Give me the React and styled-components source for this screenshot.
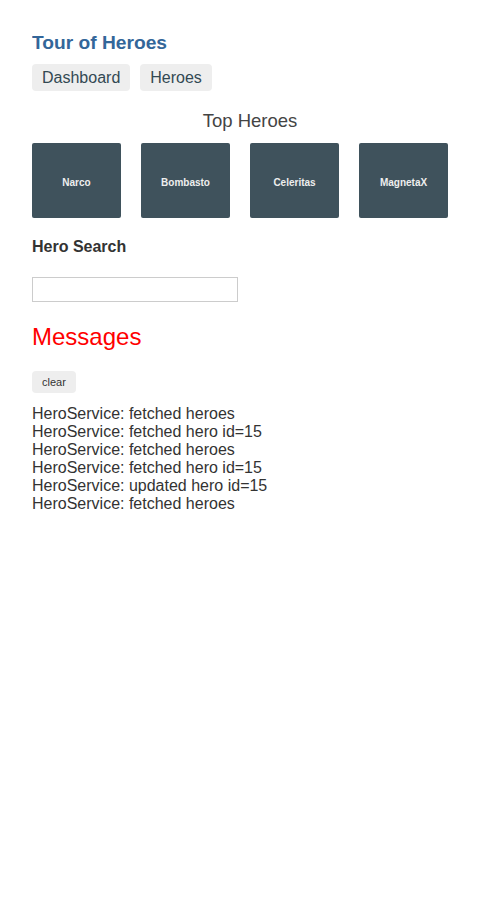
import React from 'react'
import styled, { createGlobalStyle } from 'styled-components'

const GlobalStyle = createGlobalStyle`
  html, body { background: #fff; }
  body {
    margin: 32px;
    font-family: "Liberation Sans", Arial, Helvetica, sans-serif;
    color: #333;
  }
`;

const heroes = ['Narco', 'Bombasto', 'Celeritas', 'MagnetaX'];

const messages = [
  'HeroService: fetched heroes',
  'HeroService: fetched hero id=15',
  'HeroService: fetched heroes',
  'HeroService: fetched hero id=15',
  'HeroService: updated hero id=15',
  'HeroService: fetched heroes',
];

const App = () => {
  return (
    <Page>
      <GlobalStyle />
      <Title>Tour of Heroes</Title>
      <Nav>
        <NavLink href="#">Dashboard</NavLink>
        <NavLink href="#">Heroes</NavLink>
      </Nav>

      <SectionTitle>Top Heroes</SectionTitle>
      <Grid>
        {heroes.map((name) => (
          <Cell key={name}>
            <Tile>{name}</Tile>
          </Cell>
        ))}
      </Grid>

      {/* search */}
      <SearchLabel>Hero Search</SearchLabel>
      <SearchBox type="text" />

      {/* messages */}
      <MessagesTitle>Messages</MessagesTitle>
      <ClearButton>clear</ClearButton>
      <MessageList>
        {messages.map((m, i) => (
          <Message key={i}>{m}</Message>
        ))}
      </MessageList>
    </Page>
  )
}

const Page = styled.div`
  display: flex;
  flex-direction: column;
  align-items: flex-start;
`;

const Title = styled.h1`
  margin: 0;
  font-size: 19.2px;
  line-height: 22px;
  font-weight: bold;
  color: #336699;
`;

const Nav = styled.nav`
  display: flex;
  gap: 10px;
  margin-top: 10px;
`;

const NavLink = styled.a`
  display: block;
  padding: 5px 10px;
  line-height: 17px;
  font-size: 16px;
  background-color: #eee;
  border-radius: 4px;
  color: #334953;
  text-decoration: none;
`;

const SectionTitle = styled.h3`
  align-self: stretch;
  margin: 19px 0 0;
  text-align: center;
  font-size: 18.5px;
  line-height: 21px;
  font-weight: lighter;
  color: #444;
`;

const Grid = styled.div`
  align-self: stretch;
  display: grid;
  grid-template-columns: repeat(4, 1fr);
  margin-top: 12px;
`;

const Cell = styled.div`
  padding-right: 20px;
`;

const Tile = styled.div`
  height: 75px;
  display: flex;
  align-items: center;
  justify-content: center;
  padding-top: 3px;
  box-sizing: border-box;
  background-color: #3f525c;
  border-radius: 2px;
  color: #eee;
  font-size: 10px;
  font-weight: bold;
`;

const SearchLabel = styled.h4`
  margin: 20px 0 0;
  font-size: 16px;
  line-height: 18px;
  font-weight: bold;
  color: #333;
`;

const SearchBox = styled.input`
  margin-top: 21px;
  width: 206px;
  height: 25px;
  box-sizing: border-box;
  border: 1px solid #ccc;
  padding: 0 4px;
  font-family: inherit;
`;

const MessagesTitle = styled.h2`
  margin: 21px 0 0;
  font-size: 24px;
  line-height: 28px;
  font-weight: normal;
  color: red;
`;

const ClearButton = styled.button`
  margin-top: 20px;
  height: 22px;
  padding: 0 10px;
  border: none;
  border-radius: 4px;
  background-color: #eee;
  color: #333;
  font-family: inherit;
  font-size: 11px;
`;

const MessageList = styled.div`
  margin-top: 12px;
`;

const Message = styled.div`
  font-size: 16px;
  line-height: 18px;
  color: #333;
`;

export default App
